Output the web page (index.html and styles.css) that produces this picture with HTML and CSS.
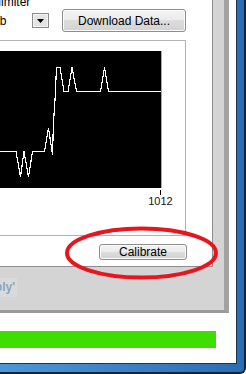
FILE: index.html
```html
<!DOCTYPE html>
<html lang="en">
<head>
  <meta charset="UTF-8" />
  <meta name="viewport" content="width=device-width, initial-scale=1.0" />
  <title>Sensor Calibration</title>
  <link rel="stylesheet" href="styles.css">
</head>
<body>
  <div class="window">
    <div class="client">
      <div class="form">
        <div class="panel">
          <div class="panel-body">
            <div class="toolbar">
              <div class="field">
                <label class="field-label">Delimiter</label>
                <div class="combo">
                  <span class="combo-text">Tab</span>
                  <span class="combo-btn">
                    <svg width="7" height="4" viewBox="0 0 7 4"><path d="M0 0H7L3.5 4Z" fill="#000"/></svg>
                  </span>
                </div>
              </div>
              <button class="btn btn-download">Download Data...</button>
            </div>

            <div class="group">
              <svg class="chart" width="177" height="137" viewBox="-15 51 177 137">
                <rect x="-15" y="51" width="176" height="137" fill="#000"/>
                <line x1="161.5" y1="51" x2="161.5" y2="188" stroke="#a8a8a8"/>
                <polyline fill="none" stroke="#fff" stroke-width="1.2" shape-rendering="crispEdges"
                  points="-15,151.5 16,151.5 20.5,177 24,151.5 28.5,177 32.5,151.5 44.5,151.5 48.5,128 52.5,154.5 53.5,122 55,100 56.5,67.5 60,67.5 64,91.5 68,91.5 72,67.5 76.5,91.5 100.5,91.5 104.5,67.5 108.5,91.5 161,91.5"/>
              </svg>
              <div class="axis">
                <div class="axis-end">
                  <span class="tick"></span>
                  <span class="tick-label">1012</span>
                </div>
              </div>
            </div>

            <div class="actions">
              <button class="btn btn-calibrate">Calibrate</button>
            </div>
          </div>
        </div>
        <div class="hint"><span class="hint-text">'Apply'</span></div>
      </div>
      <div class="progress"></div>
    </div>

    <!-- red marker drawn over the screenshot -->
    <svg class="marker" width="246" height="374" viewBox="0 0 246 374">
      <ellipse cx="141.5" cy="253" rx="74.5" ry="24.5" fill="none" stroke="#e8151f" stroke-width="4"/>
    </svg>
  </div>
</body>
</html>
```

FILE: styles.css
```css
body {
  margin: 0;
  font-family: "Liberation Sans", Arial, sans-serif;
  font-size: 12px;
  color: #000;
}
.window {
  position: relative;
  width: 246px;
  height: 374px;
  box-sizing: border-box;
  padding: 0 7px 8px 0;
  background: linear-gradient(to right, #4d97d6, #2c6db1);
  border-right: 2px solid #10243a;
  border-bottom: 2px solid #10243a;
  border-bottom-right-radius: 6px;
  overflow: hidden;
}
.client {
  width: 237px;
  height: 364px;
  box-sizing: border-box;
  background: #fff;
  border-right: 1px solid #1a3552;
  border-bottom: 1px solid #1a3552;
}
.form {
  width: 229px;
  height: 313px;
  box-sizing: border-box;
  background: #d4d4d4;
  border-right: 5px solid #a2a2a2;
  border-bottom: 3px solid #9a9a9a;
}
.panel {
  width: 213px;
  height: 267px;
  box-sizing: border-box;
  background: #fff;
  border-right: 1px solid #8e8e8e;
  border-bottom: 1px solid #8e8e8e;
  overflow: hidden;
}
.panel-body {
  width: 203px;
  margin: -4px 0 0 -16px;
}
.toolbar {
  display: flex;
  align-items: flex-start;
}
.field {
  width: 65px;
  display: flex;
  flex-direction: column;
}
.field-label {
  line-height: 14px;
  margin-top: -1px;
  margin-left: -1px;
}
.combo {
  margin-top: 3px;
  height: 17px;
  display: flex;
  align-items: center;
  justify-content: space-between;
}
.combo-text {
  padding-left: 3px;
  line-height: 14px;
}
.combo-btn {
  width: 17px;
  height: 15px;
  box-sizing: border-box;
  border: 1px solid #8c8c8c;
  box-shadow: inset 0 0 0 1px #f4f4f4;
  background: #e4e4e4;
  display: flex;
  align-items: center;
  justify-content: center;
}
.btn {
  font-family: "Liberation Sans", Arial, sans-serif;
  font-size: 12px;
  color: #000;
  padding: 0;
  box-sizing: border-box;
  border: 1px solid #8d8d8d;
  border-radius: 3px;
  background: linear-gradient(#f3f3f3 0%, #ebebeb 50%, #dddddd 50%, #d2d2d2 100%);
  box-shadow: inset 0 0 0 1px #fbfbfb;
}
.btn-download {
  margin: 13px 0 0 13px;
  width: 124px;
  height: 23px;
}
.group {
  margin-top: 8px;
  width: 202px;
  height: 196px;
  box-sizing: border-box;
  border: 1px solid #b2b2b2;
  padding-top: 10px;
}
.chart {
  display: block;
}
.axis {
  width: 177px;
  display: flex;
  justify-content: flex-end;
}
.axis-end {
  width: 25px;
  margin-right: -11px;
  display: flex;
  flex-direction: column;
  align-items: center;
}
.tick {
  width: 1px;
  height: 5px;
  margin-top: 2px;
  background: #000;
}
.tick-label {
  font-size: 11px;
  line-height: 13px;
  color: #1a1020;
}
.actions {
  display: flex;
  justify-content: flex-end;
  margin-top: 8px;
}
.btn-calibrate {
  width: 88px;
  height: 16px;
  line-height: 13px;
}
.hint {
  margin-top: 11px;
  width: 17px;
  overflow: hidden;
}
.hint-text {
  display: inline-block;
  margin-left: -26px;
  padding: 0 2px;
  white-space: nowrap;
  font-weight: bold;
  line-height: 19px;
  color: #88a6c0;
  background: #dadada;
}
.progress {
  margin-top: 18px;
  width: 216px;
  height: 17px;
  background: #3ede00;
}
.marker {
  position: absolute;
  left: 0;
  top: 0;
  pointer-events: none;
}
```
